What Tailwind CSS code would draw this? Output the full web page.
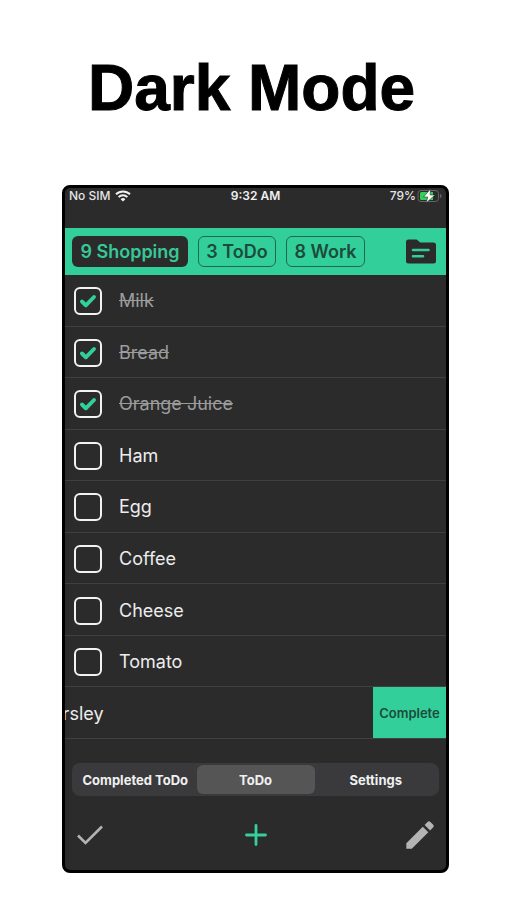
<!DOCTYPE html>
<html lang="en">
<head>
<meta charset="utf-8">
<meta name="viewport" content="width=device-width, initial-scale=1">
<title>Dark Mode</title>
<script src="https://cdn.jsdelivr.net/npm/@tailwindcss/browser@4"></script>
</head>
<body class="min-h-screen bg-white pr-[58px] pl-[62px] font-['Inter',sans-serif]">
<h1 class="pt-[52px] pr-2 pb-[61px] text-center font-['Liberation_Sans',sans-serif] text-[64px] leading-[72px] font-bold whitespace-nowrap text-black [-webkit-text-stroke:1px_black]">Dark Mode</h1>

<main class="overflow-hidden rounded-lg border-3 border-black bg-[#2b2b2b] text-white">
  <div class="grid h-10 grid-cols-3 items-start px-1 text-xs leading-4 font-medium text-[#e4e4e4]">
    <div class="flex items-center gap-1 whitespace-nowrap">
      <span>No SIM</span>
      <svg class="h-3 w-4" viewBox="0 0 16 12" fill="none" stroke="#f0f0f0" stroke-width="2" aria-hidden="true">
        <path d="M1 4.3a10 10 0 0 1 14 0M3.6 7.1a6.2 6.2 0 0 1 8.8 0"/>
        <path d="M8 11.6 5.6 9.2a3.4 3.4 0 0 1 4.8 0z" fill="#f0f0f0" stroke="none"/>
      </svg>
    </div>
    <div class="text-center font-semibold whitespace-nowrap text-[#f0f0f0]">9:32 AM</div>
    <div class="flex items-center justify-end gap-px">
      <span>79%</span>
      <svg class="h-3.5 w-[25px]" viewBox="0 0 25 14" aria-hidden="true">
        <rect x="1" y="1.5" width="20.5" height="11" rx="3" fill="none" stroke="#666"/>
        <path d="M4.500 3h11.500v8H4.500a1.500 1.500 0 0 1-1.500-1.500v-5A1.500 1.500 0 0 1 4.500 3z" fill="#32d058"/>
        <path d="M23 5v4c1-.3 1.500-1 1.500-2S24 5.300 23 5z" fill="#666"/>
        <path d="M13.500 0 6.500 8h4.300L9 14l9-8h-4.800z" fill="#fff" stroke="#2b2b2b" stroke-width=".6"/>
      </svg>
    </div>
  </div>

  <nav class="flex h-[47px] items-center bg-[#33cf9b] pr-[9px] pl-[7px] text-lg leading-6 font-semibold whitespace-nowrap" aria-label="Lists">
    <button class="h-[31px] w-[116px] rounded-md bg-[#2b2b2b] text-[#35c997]">9 Shopping</button>
    <button class="ml-2.5 h-[31px] w-[78px] rounded-md border border-[#20694f] text-[#1c4b3b]">3 ToDo</button>
    <button class="ml-2.5 h-[31px] w-[79px] rounded-md border border-[#20694f] text-[#1c4b3b]">8 Work</button>
    <button class="ml-auto" aria-label="Folders">
      <svg class="h-[25px] w-8" viewBox="0 0 32 25" aria-hidden="true">
        <path d="M3.500.5h8.200l3.500 3h13.300a2.500 2.500 0 0 1 2.500 2.500v16a2.500 2.500 0 0 1-2.500 2.500h-25A2.500 2.500 0 0 1 1 22V3A2.500 2.500 0 0 1 3.500.5z" fill="#2b2b2b"/>
        <path d="M8 11h15.500M8 17.200h10" stroke="#33cf9b" stroke-width="2.600" stroke-linecap="round"/>
      </svg>
    </button>
  </nav>

  <ul class="grid min-h-[464px] auto-rows-fr text-lg leading-6 text-[#ededed]">
    <li class="flex border-b border-[#404040]"><label class="flex flex-1 items-center gap-[17px] pt-0.5 pl-[9px]"><input type="checkbox" checked class="size-7 appearance-none rounded-md border-2 border-[#f2f2f2] bg-[url('data:image/svg+xml,%3Csvg%20xmlns=%22http://www.w3.org/2000/svg%22%20viewBox=%220%200%2024%2024%22%3E%3Cpath%20d=%22M6%2012.500l3.800%203.800%208.200-8.300%22%20fill=%22none%22%20stroke=%22%2333cf9b%22%20stroke-width=%223.900%22%20stroke-linecap=%22round%22%20stroke-linejoin=%22round%22/%3E%3C/svg%3E')]"><span class="text-[#9c9c9c] line-through">Milk</span></label></li>
    <li class="flex border-b border-[#404040]"><label class="flex flex-1 items-center gap-[17px] pt-0.5 pl-[9px]"><input type="checkbox" checked class="size-7 appearance-none rounded-md border-2 border-[#f2f2f2] bg-[url('data:image/svg+xml,%3Csvg%20xmlns=%22http://www.w3.org/2000/svg%22%20viewBox=%220%200%2024%2024%22%3E%3Cpath%20d=%22M6%2012.500l3.800%203.800%208.200-8.300%22%20fill=%22none%22%20stroke=%22%2333cf9b%22%20stroke-width=%223.900%22%20stroke-linecap=%22round%22%20stroke-linejoin=%22round%22/%3E%3C/svg%3E')]"><span class="text-[#9c9c9c] line-through">Bread</span></label></li>
    <li class="flex border-b border-[#404040]"><label class="flex flex-1 items-center gap-[17px] pt-0.5 pl-[9px]"><input type="checkbox" checked class="size-7 appearance-none rounded-md border-2 border-[#f2f2f2] bg-[url('data:image/svg+xml,%3Csvg%20xmlns=%22http://www.w3.org/2000/svg%22%20viewBox=%220%200%2024%2024%22%3E%3Cpath%20d=%22M6%2012.500l3.800%203.800%208.200-8.300%22%20fill=%22none%22%20stroke=%22%2333cf9b%22%20stroke-width=%223.900%22%20stroke-linecap=%22round%22%20stroke-linejoin=%22round%22/%3E%3C/svg%3E')]"><span class="text-[#9c9c9c] line-through">Orange Juice</span></label></li>
    <li class="flex border-b border-[#404040]"><label class="flex flex-1 items-center gap-[17px] pt-0.5 pl-[9px]"><input type="checkbox" class="size-7 appearance-none rounded-md border-2 border-[#f2f2f2]"><span>Ham</span></label></li>
    <li class="flex border-b border-[#404040]"><label class="flex flex-1 items-center gap-[17px] pt-0.5 pl-[9px]"><input type="checkbox" class="size-7 appearance-none rounded-md border-2 border-[#f2f2f2]"><span>Egg</span></label></li>
    <li class="flex border-b border-[#404040]"><label class="flex flex-1 items-center gap-[17px] pt-0.5 pl-[9px]"><input type="checkbox" class="size-7 appearance-none rounded-md border-2 border-[#f2f2f2]"><span>Coffee</span></label></li>
    <li class="flex border-b border-[#404040]"><label class="flex flex-1 items-center gap-[17px] pt-0.5 pl-[9px]"><input type="checkbox" class="size-7 appearance-none rounded-md border-2 border-[#f2f2f2]"><span>Cheese</span></label></li>
    <li class="flex border-b border-[#404040]"><label class="flex flex-1 items-center gap-[17px] pt-0.5 pl-[9px]"><input type="checkbox" class="size-7 appearance-none rounded-md border-2 border-[#f2f2f2]"><span>Tomato</span></label></li>
    <li class="flex overflow-hidden border-b border-[#404040]">
      <label class="-ml-[78px] flex flex-1 items-center gap-[17px] pt-0.5 pl-[9px]"><input type="checkbox" class="size-7 appearance-none rounded-md border-2 border-[#f2f2f2]"><span>Parsley</span></label>
      <button class="w-[73px] bg-[#33cf9b] text-[13px] font-semibold text-[#1c4b3b]">Complete</button>
    </li>
  </ul>

  <nav class="mx-[7px] mt-6 grid h-[33px] grid-cols-[1fr_118px_1fr] rounded-lg bg-[#3a3a3c] p-0.5 text-[13px] leading-4 font-bold whitespace-nowrap text-[#f0f0f0]" aria-label="Views">
    <button>Completed ToDo</button>
    <button class="rounded-md bg-[#555555]" aria-current="page">ToDo</button>
    <button>Settings</button>
  </nav>

  <footer class="grid h-[74px] grid-cols-3 items-center px-3 pt-1">
    <button class="justify-self-start" aria-label="Complete all">
      <svg class="h-5 w-[26px]" viewBox="0 0 26 20" fill="none" stroke="#b3b3b3" stroke-width="2.600" aria-hidden="true"><path d="M1 10.500 8.500 18 25 1.500"/></svg>
    </button>
    <button class="justify-self-center" aria-label="Add item">
      <svg class="size-[22px]" viewBox="0 0 22 22" stroke="#35d09d" stroke-width="2.800" stroke-linecap="round" aria-hidden="true"><path d="M11 1.500v19M1.500 11h19"/></svg>
    </button>
    <button class="justify-self-end" aria-label="Edit">
      <svg class="size-7" viewBox="0 0 28 28" fill="#b3b3b3" aria-hidden="true"><path d="M.3 22.200 16.800 5.700l5.500 5.500L5.800 27.700H.3zM18.600 3.900 21.500 1a2 2 0 0 1 2.900 0l2.600 2.600a2 2 0 0 1 0 2.900l-2.900 2.900z"/></svg>
    </button>
  </footer>
</main>
</body>
</html>
